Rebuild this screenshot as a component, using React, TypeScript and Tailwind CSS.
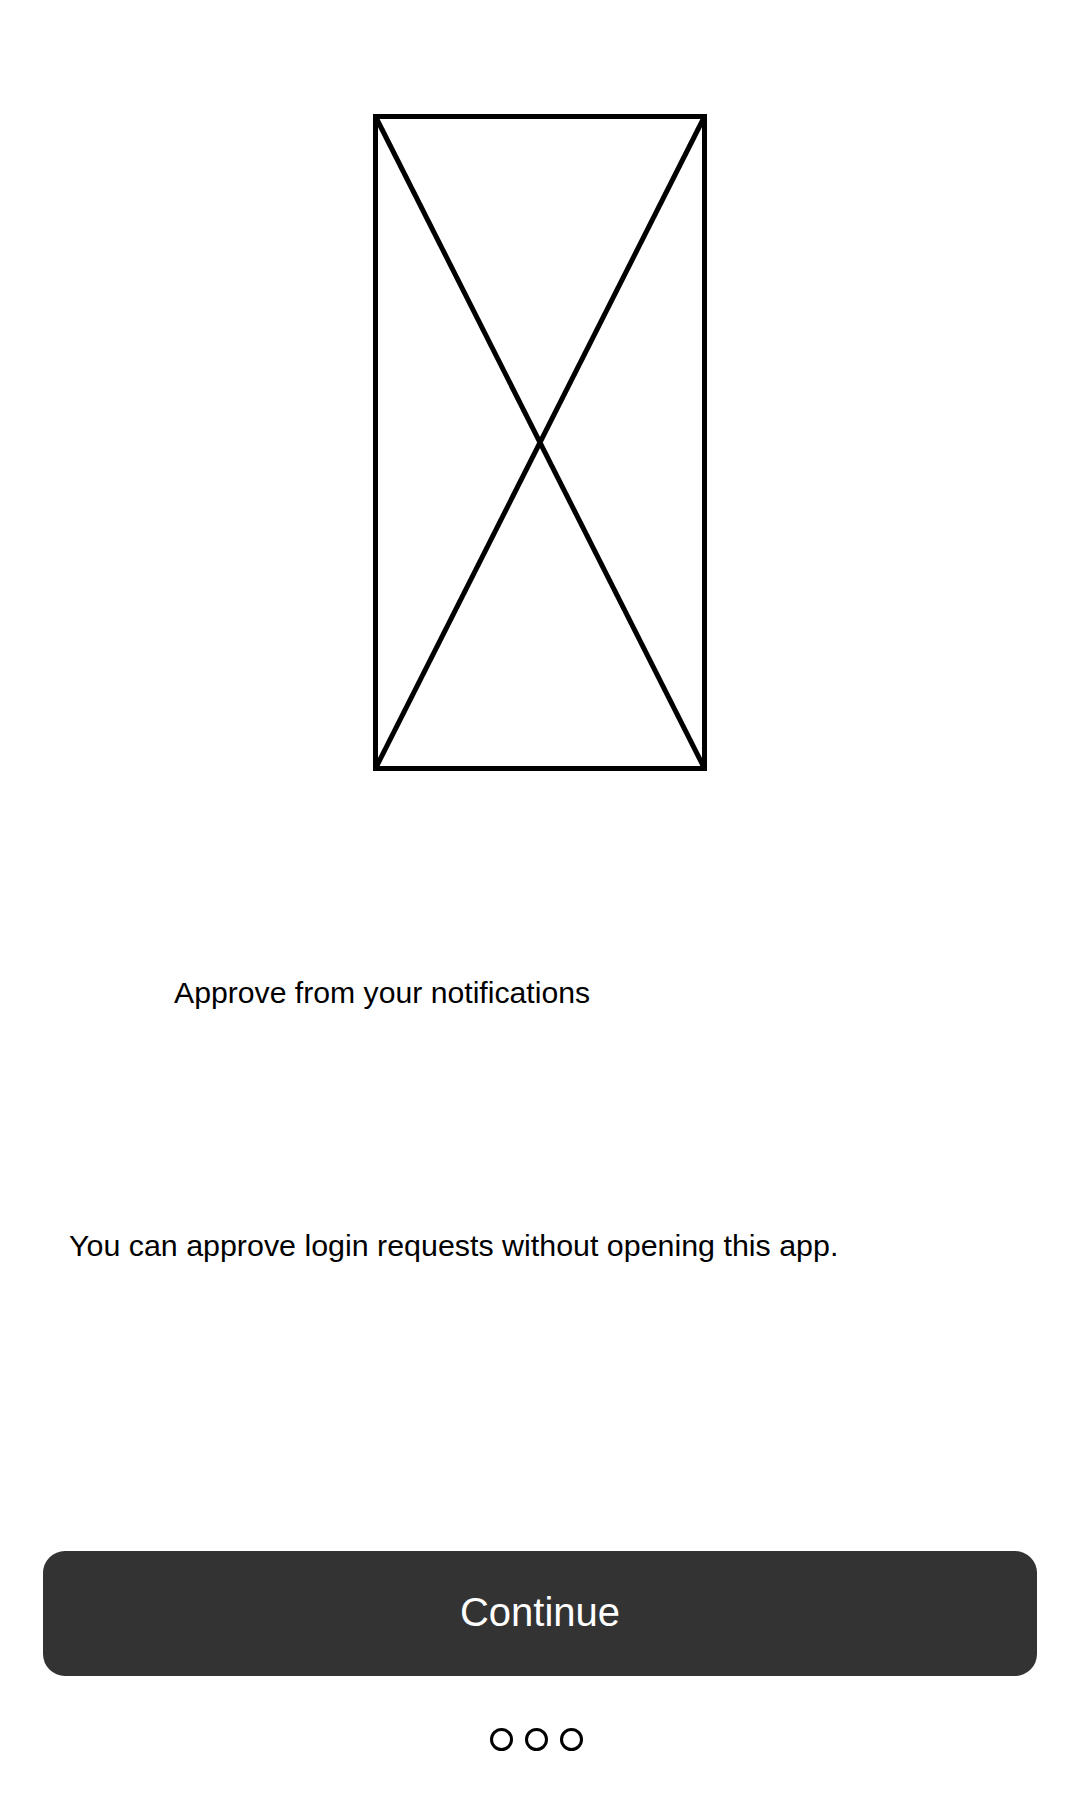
import React from "react";

export default function App() {
  return (
    <div
      className="w-[1080px] h-[1800px] bg-white flex flex-col text-black"
      style={{ fontFamily: '"Liberation Sans", Arial, sans-serif' }}
    >
      <div className="pt-[114px] flex justify-center">
        <svg width="334" height="657" viewBox="0 0 334 657" className="block">
          <rect x="2.5" y="2.5" width="329" height="652" fill="none" stroke="#000" strokeWidth="5" />
          <line x1="2.5" y1="2.5" x2="331.5" y2="654.5" stroke="#000" strokeWidth="5" />
          <line x1="331.5" y1="2.5" x2="2.5" y2="654.5" stroke="#000" strokeWidth="5" />
        </svg>
      </div>
      <div className="mt-[204px] pl-[174px] text-[30.2px] leading-[36px]">
        Approve from your notifications
      </div>
      <div className="mt-[216px] pl-[69px] text-[30.4px] leading-[36px]">
        You can approve login requests without opening this app.
      </div>
      <div className="mt-[288px] mx-[43px] h-[125px] rounded-[22px] bg-[#333333] flex items-center justify-center">
        <span className="text-white text-[40px] leading-none -mt-[3px]">Continue</span>
      </div>
      <div className="mt-[52px] flex justify-center gap-[12px] pr-[8px]">
        <div className="w-[23px] h-[23px] rounded-full border-[3px] border-black" />
        <div className="w-[23px] h-[23px] rounded-full border-[3px] border-black" />
        <div className="w-[23px] h-[23px] rounded-full border-[3px] border-black" />
      </div>
    </div>
  );
}
